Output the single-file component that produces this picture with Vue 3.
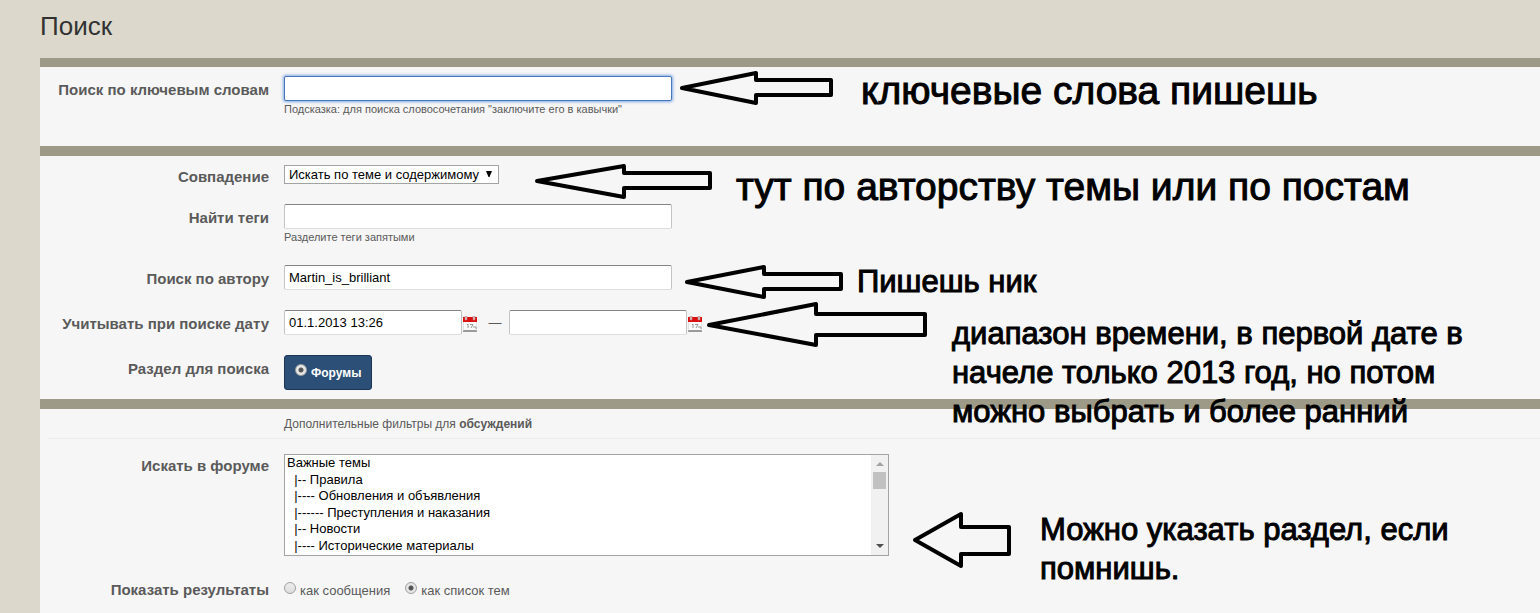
<script setup>
import { ref } from 'vue'

const keywords = ref('')
const match = ref('both')
const tags = ref('')
const author = ref('Martin_is_brilliant')
const dateFrom = ref('01.1.2013 13:26')
const dateTo = ref('')
const section = ref('forums')
const forum = ref(null)
const display = ref('topics')

const forums = [
  'Важные темы',
  '\u00a0\u00a0|-- Правила',
  '\u00a0\u00a0|---- Обновления и объявления',
  '\u00a0\u00a0|------ Преступления и наказания',
  '\u00a0\u00a0|-- Новости',
  '\u00a0\u00a0|---- Исторические материалы',
]

const arrows = [
  '682,88 756,73 756,80 831,80 831,95 756,95 756,103',
  '537,181 624,166 624,173 710,173 710,188 624,188 624,197',
  '687,282 764,267 764,274 841,274 841,289 764,289 764,297',
  '709,325 816,304 816,314 925,314 925,335 816,335 816,345',
  '915,540 961,514 961,527 1009,527 1009,554 961,554 961,566',
]
</script>

<template>
  <main class="page">
    <h1>Поиск</h1>

    <form class="search" @submit.prevent>
      <section class="block first">
        <div class="row">
          <label class="name" for="keywords">Поиск по ключевым словам</label>
          <div class="field">
            <input id="keywords" v-model="keywords" class="text focused" type="text" />
            <p class="hint">Подсказка: для поиска словосочетания "заключите его в кавычки"</p>
          </div>
        </div>
      </section>

      <section class="block second">
        <div class="row match">
          <label class="name" for="match">Совпадение</label>
          <div class="field">
            <span class="dropdown">
              <select id="match" v-model="match">
                <option value="both">Искать по теме и содержимому</option>
              </select>
              <svg class="caret" viewBox="0 0 6 7" aria-hidden="true"><path d="M0 0h6L3.5 6h-1z" /></svg>
            </span>
          </div>
        </div>
        <div class="row tags">
          <label class="name" for="tags">Найти теги</label>
          <div class="field">
            <input id="tags" v-model="tags" class="text" type="text" />
            <p class="hint">Разделите теги запятыми</p>
          </div>
        </div>
        <div class="row">
          <label class="name" for="author">Поиск по автору</label>
          <div class="field">
            <input id="author" v-model="author" class="text" type="text" />
          </div>
        </div>
        <div class="row">
          <label class="name" for="date-from">Учитывать при поиске дату</label>
          <div class="field dates">
            <input id="date-from" v-model="dateFrom" class="text date" type="text" />
            <button class="calendar" type="button" aria-label="Начальная дата">
              <svg viewBox="0 0 14 16">
                <path d="M0 5h14v10H0z" fill="#fafafa" /><path d="M0 14h14v2H0z" fill="#9a9a9a" />
                <path d="M0 5v10M14 5v10" stroke="#ccc" /><path d="M0 1h14v5H0z" fill="#dc1010" />
                <path d="M2 0h2v4H2zM10 0h2v4h-2z" fill="#d8c4c4" stroke="#b98080" stroke-width=".5" />
                <path d="M4 9l1-1v4M7 8.500h3L8 12M10 11h3v2" fill="none" stroke="#999" />
              </svg>
            </button>
            <span class="dash">—</span>
            <input id="date-to" v-model="dateTo" class="text date" type="text" aria-label="Конечная дата" />
            <button class="calendar" type="button" aria-label="Конечная дата">
              <svg viewBox="0 0 14 16">
                <path d="M0 5h14v10H0z" fill="#fafafa" /><path d="M0 14h14v2H0z" fill="#9a9a9a" />
                <path d="M0 5v10M14 5v10" stroke="#ccc" /><path d="M0 1h14v5H0z" fill="#dc1010" />
                <path d="M2 0h2v4H2zM10 0h2v4h-2z" fill="#d8c4c4" stroke="#b98080" stroke-width=".5" />
                <path d="M4 9l1-1v4M7 8.500h3L8 12M10 11h3v2" fill="none" stroke="#999" />
              </svg>
            </button>
          </div>
        </div>
        <div class="row">
          <span class="name">Раздел для поиска</span>
          <div class="field">
            <label class="tab">
              <input v-model="section" type="radio" name="section" value="forums" />
              <span>Форумы</span>
            </label>
          </div>
        </div>
      </section>

      <section class="block third">
        <p class="filters">Дополнительные фильтры для <strong>обсуждений</strong></p>
        <div class="row">
          <label class="name" for="forum">Искать в форуме</label>
          <div class="listbox">
            <select id="forum" v-model="forum" size="6">
              <option v-for="f in forums" :key="f" :value="f">{{ f }}</option>
            </select>
            <div class="scrollbar" aria-hidden="true">
              <svg viewBox="0 0 8 4"><path d="M0 4L4 0l4 4z" fill="#a3a3a3" /></svg>
              <span class="thumb"></span>
              <svg viewBox="0 0 8 4"><path d="M0 0l4 4 4-4z" fill="#505050" /></svg>
            </div>
          </div>
        </div>
        <div class="row results">
          <span class="name">Показать результаты</span>
          <div class="field radios">
            <label><input v-model="display" type="radio" name="display" value="posts" /><span>как сообщения</span></label>
            <label><input v-model="display" type="radio" name="display" value="topics" /><span>как список тем</span></label>
          </div>
        </div>
      </section>
    </form>

    <svg class="arrows" aria-hidden="true">
      <polygon v-for="points in arrows" :key="points" :points="points" />
    </svg>
    <p class="note large keywords-note">ключевые слова пишешь</p>
    <p class="note large match-note">тут по авторству темы или по постам</p>
    <p class="note author-note">Пишешь ник</p>
    <p class="note date-note">диапазон времени, в первой дате в<br />начеле только 2013 год, но потом<br />можно выбрать и более ранний</p>
    <p class="note forum-note">Можно указать раздел, если<br />помнишь.</p>
  </main>
</template>

<style>
body {
  background: #dcd9cc;
}
</style>

<style scoped>
* {
  box-sizing: border-box;
}
.page {
  position: relative;
  padding-left: 40px;
  overflow: hidden;
  font-family: "Liberation Sans", Arial, sans-serif;
  font-size: 13px;
  color: #5a5a5a;
}
h1 {
  margin: 0;
  height: 58px;
  padding-top: 11px;
  font-size: 26px;
  line-height: 30px;
  font-weight: 400;
  color: #323232;
}
p {
  margin: 0;
}
.block {
  border-top: 10px solid #9e9a88;
  background: #f6f6f6;
}
.first {
  border-top-width: 9px;
  padding: 9px 0 30px;
}
.second {
  display: grid;
  gap: 20px;
  padding: 9px 0;
}
.row {
  display: grid;
  grid-template-columns: 229px 1fr;
  column-gap: 15px;
  align-items: start;
}
.name {
  padding-top: 5px;
  text-align: right;
  font-size: 15px;
  line-height: 18px;
  font-weight: 700;
}
.match .name {
  padding-top: 5px;
  line-height: 14px;
}
.tags .hint {
  padding-bottom: 1px;
}
.text {
  display: block;
  width: 388px;
  height: 25px;
  padding: 0 4px;
  border: 1px solid #c4c4c4;
  border-top-color: #848484;
  border-bottom-color: #dedede;
  border-radius: 2px;
  outline: none;
  background: #fff;
  color: #000;
  font: 13px "Liberation Sans", Arial, sans-serif;
}
.focused {
  border-color: #4a77bb;
  box-shadow: 0 0 3px 1px #83a9e5;
}
.hint {
  padding-top: 2px;
  font-size: 11px;
  line-height: 13px;
}
.dropdown {
  display: flex;
  align-items: center;
  width: 215px;
  height: 19px;
  border: 1px solid #a3a3a3;
  background: #fff;
}
.dropdown select {
  flex: 1;
  width: 100%;
  padding: 0 4px;
  border: 0;
  appearance: none;
  background: transparent;
  color: #000;
  font: 13px "Liberation Sans", Arial, sans-serif;
}
.caret {
  width: 6px;
  height: 7px;
  margin-right: 6px;
}
.dates {
  display: flex;
}
.date {
  width: 178px;
}
.calendar {
  width: 14px;
  height: 16px;
  margin: 6px 0 0 1px;
  padding: 0;
  border: 0;
  background: none;
}
.calendar svg {
  display: block;
  width: 14px;
  height: 16px;
}
.dash {
  width: 32px;
  text-align: center;
  line-height: 25px;
  padding-left: 4px;
}
input[type="radio"] {
  appearance: none;
  width: 12px;
  height: 12px;
  margin: 0;
  border: 1px solid #a0a0a0;
  border-radius: 50%;
  background: linear-gradient(#eee, #ddd);
}
input[type="radio"]:checked {
  background: radial-gradient(circle, #555 0 2px, #e6e6e6 3px);
}
.tab {
  display: inline-flex;
  align-items: center;
  gap: 4px;
  height: 35px;
  padding: 0 10px;
  border: 1px solid #1d3652;
  border-radius: 3px;
  background: #2b4f76;
  color: #fff;
  font-size: 12px;
  font-weight: 700;
  vertical-align: top;
}
.tab input,
.radios input {
  margin-bottom: 5px;
}
.filters {
  margin-left: 8px;
  padding: 8px 0 6px 236px;
  border-bottom: 1px solid #ededed;
  font-size: 12px;
  line-height: 15px;
}
.third .row {
  margin-top: 15px;
}
.third .name {
  padding-top: 3px;
}
.listbox {
  display: flex;
  width: 605px;
  height: 102px;
  border: 1px solid #a3a3a3;
  background: #fff;
}
.listbox select {
  flex: 1;
  height: 100px;
  padding: 0;
  border: 0;
  outline: none;
  overflow: hidden;
  background: #fff;
  color: #000;
  font: 13px "Liberation Sans", Arial, sans-serif;
}
.listbox option {
  height: 17px;
  min-height: 16px;
  padding: 0 2px;
  line-height: 16px;
}
.listbox option:nth-child(even) {
  height: 16px;
}
.scrollbar {
  display: flex;
  flex-direction: column;
  align-items: center;
  width: 17px;
  padding: 7px 0;
  background: #f1f1f1;
}
.scrollbar svg {
  width: 8px;
  height: 4px;
}
.thumb {
  width: 13px;
  height: 17px;
  margin: 6px 0 auto;
  background: #c1c1c1;
}
.third .results {
  margin-top: 22px;
  padding-bottom: 14px;
}
.radios {
  display: flex;
  gap: 15px;
  padding-top: 4px;
}
.radios label {
  display: flex;
  align-items: center;
  gap: 4px;
  line-height: 17px;
}
.arrows {
  position: absolute;
  inset: 0;
  width: 100%;
  height: 100%;
  pointer-events: none;
}
.arrows polygon {
  fill: none;
  stroke: #000;
  stroke-width: 4;
  stroke-linejoin: round;
}
.note {
  position: absolute;
  color: #000;
  font-size: 31px;
  line-height: 39px;
  white-space: nowrap;
  -webkit-text-stroke: 1px #000;
}
.large {
  font-size: 39px;
  line-height: 42px;
}
.keywords-note {
  left: 861px;
  top: 70px;
}
.match-note {
  left: 736px;
  top: 166px;
}
.author-note {
  left: 857px;
  top: 262px;
}
.date-note {
  left: 952px;
  top: 314px;
}
.forum-note {
  left: 1040px;
  top: 510px;
}
</style>
